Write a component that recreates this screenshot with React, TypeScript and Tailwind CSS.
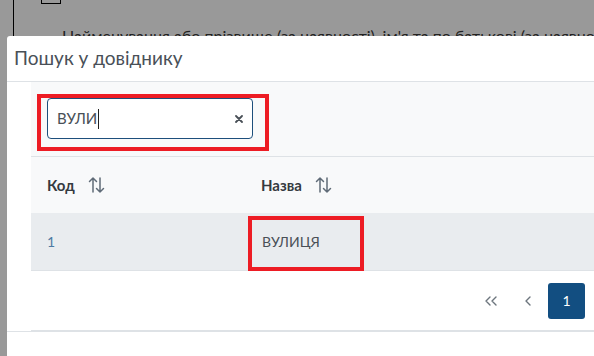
const SortIcon = () => (
  <svg width="17" height="18" viewBox="0 0 17 18" fill="none" stroke="#5f6b77" strokeWidth="1.5" strokeLinecap="round" strokeLinejoin="round">
    <path d="M5 16V2M1.5 5.5L5 2l3.5 3.5" />
    <path d="M12 2v14M8.5 12.5L12 16l3.5-3.5" />
  </svg>
);

const App = () => {
  return (
    <div className="relative w-[594px] h-[356px] overflow-hidden bg-[#999999] font-['Lato',sans-serif]">
      {/* page behind the dialog */}
      <div className="absolute left-[13px] top-0 h-[40px] w-px bg-black" />
      <div className="absolute left-[41px] top-[-17px] h-[21px] w-[20px] border border-black" />
      <div className="absolute left-[62px] top-[26px] whitespace-nowrap text-[16px] leading-[20px] text-[#222]">
        Найменування або прізвище (за наявності), ім'я та по батькові (за наявності)
      </div>

      {/* dialog */}
      <div className="absolute left-[7px] top-[36px] w-[700px] h-[340px] rounded-tl-[3px] bg-white">
        <div className="flex h-[46px] items-center border-b border-[#dee2e6] pl-[7px]">
          <span className="text-[19px] text-[#495057]">Пошук у довіднику</span>
        </div>

        <div className="pl-[24px]">
          <div className="bg-[#f8f9fa]">
            <div className="h-[75px] border-b border-[#dee2e6] px-4 pt-4">
              <div className="flex h-[41px] w-[206px] items-center justify-between rounded-[4px] border border-[#1d4f7c] bg-white pl-[9px] pr-[9px]">
                <span className="flex items-center text-[15px] text-[#495057]">
                  ВУЛИ
                  <span className="ml-px inline-block h-[20px] w-px bg-[#222]" />
                </span>
                <svg width="8" height="8" viewBox="0 0 8 8" stroke="#495057" strokeWidth="1.8" strokeLinecap="round">
                  <path d="M1 1l6 6M7 1L1 7" />
                </svg>
              </div>
            </div>

            <div className="flex h-[56px] items-center text-[15px] font-bold text-[#343a40]">
              <div className="flex w-[214px] items-center gap-[13px] pl-4">
                <span>Код</span>
                <SortIcon />
              </div>
              <div className="flex items-center gap-[13px] pl-4">
                <span>Назва</span>
                <SortIcon />
              </div>
            </div>

            <div className="flex h-[58px] items-center border-b border-[#dee2e6] bg-[#e9ecef] text-[14px] text-[#495057]">
              <div className="w-[214px] pl-4 text-[#4d7aa3]">1</div>
              <div className="pl-[17px]">ВУЛИЦЯ</div>
            </div>

            <div className="flex h-[60px] items-center border-b border-[#dee2e6] bg-white pl-[441px]">
              <span className="flex w-[37px] justify-center">
                <svg width="12" height="10" viewBox="0 0 12 10" fill="none" stroke="#6c757d" strokeWidth="1.4" strokeLinecap="round" strokeLinejoin="round">
                  <path d="M5 1L1 5l4 4M11 1L7 5l4 4" />
                </svg>
              </span>
              <span className="flex w-[37px] justify-center">
                <svg width="6" height="10" viewBox="0 0 6 10" fill="none" stroke="#6c757d" strokeWidth="1.4" strokeLinecap="round" strokeLinejoin="round">
                  <path d="M5 1L1 5l4 4" />
                </svg>
              </span>
              <span className="ml-[2px] flex h-[36px] w-[37px] items-center justify-center rounded-[3px] bg-[#124e81] text-[14px] text-white">
                1
              </span>
            </div>
          </div>
        </div>
        <div className="border-b border-[#dee2e6]" />
      </div>

      {/* red annotation frames */}
      <div className="absolute left-[37px] top-[94px] h-[57px] w-[232px] border-4 border-[#ed1c24]" />
      <div className="absolute left-[248px] top-[216px] h-[55px] w-[116px] border-4 border-[#ed1c24]" />
    </div>
  );
};

export default App;
